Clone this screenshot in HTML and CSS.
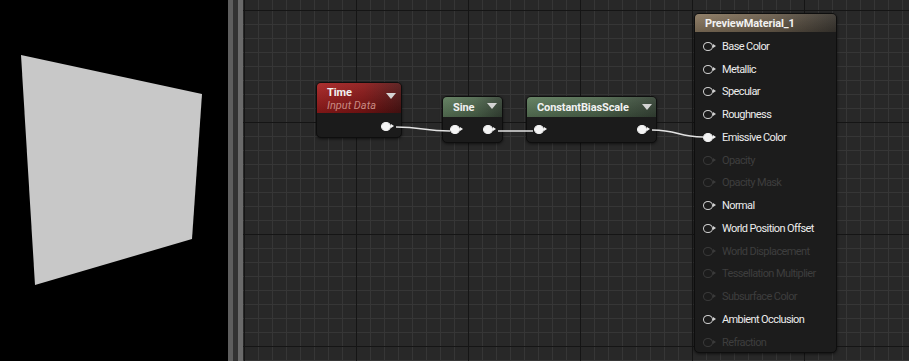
FILE: index.html
```html
<!DOCTYPE html>
<html>
  <head>
    <title>Material Editor</title>
    <link rel="stylesheet" href="styles.css">
  </head>
  <body>
    <div class="viewport">
      <svg class="preview" viewBox="0 0 228 361" width="228" height="361">
        <polygon points="21,55 202,94 192,239 35,285" fill="#c8c8c8" />
      </svg>
    </div>

    <div class="splitter">
      <span class="bar light"></span>
      <span class="bar dark"></span>
      <span class="bar lighter"></span>
    </div>

    <div class="graph">
      <!-- Time -->
      <div class="node time">
        <div class="node-head red tall">
          <div class="titles">
            <div class="node-title">Time</div>
            <div class="node-sub">Input Data</div>
          </div>
          <span class="caret"></span>
        </div>
        <div class="node-body out-only">
          <span class="pin on"></span>
        </div>
      </div>

      <!-- Sine -->
      <div class="node sine">
        <div class="node-head green">
          <div class="node-title">Sine</div>
          <span class="caret"></span>
        </div>
        <div class="node-body both">
          <span class="pin on"></span>
          <span class="pin on"></span>
        </div>
      </div>

      <!-- ConstantBiasScale -->
      <div class="node bias">
        <div class="node-head green">
          <div class="node-title">ConstantBiasScale</div>
          <span class="caret"></span>
        </div>
        <div class="node-body both">
          <span class="pin on"></span>
          <span class="pin on"></span>
        </div>
      </div>

      <!-- Result node -->
      <div class="node material">
        <div class="node-head tan">
          <div class="node-title">PreviewMaterial_1</div>
        </div>
        <div class="node-body inputs">
          <div class="row"><span class="pin"></span>Base Color</div>
          <div class="row"><span class="pin"></span>Metallic</div>
          <div class="row"><span class="pin"></span>Specular</div>
          <div class="row"><span class="pin"></span>Roughness</div>
          <div class="row"><span class="pin on"></span>Emissive Color</div>
          <div class="row off"><span class="pin"></span>Opacity</div>
          <div class="row off"><span class="pin"></span>Opacity Mask</div>
          <div class="row"><span class="pin"></span>Normal</div>
          <div class="row"><span class="pin"></span>World Position Offset</div>
          <div class="row off"><span class="pin"></span>World Displacement</div>
          <div class="row off"><span class="pin"></span>Tessellation Multiplier</div>
          <div class="row off"><span class="pin"></span>Subsurface Color</div>
          <div class="row"><span class="pin"></span>Ambient Occlusion</div>
          <div class="row off"><span class="pin"></span>Refraction</div>
        </div>
      </div>

      <svg class="wires" width="666" height="361">
        <path d="M153 127 C 180 127, 180 131, 207 131" />
        <path d="M255 131 L 290 131" />
        <path d="M409 130 C 436 130, 434 137, 460 137" />
      </svg>
    </div>
  </body>
</html>
```

FILE: styles.css
```css
html, body {
  margin: 0;
  height: 100%;
}
body {
  display: flex;
  width: 909px;
  height: 361px;
  overflow: hidden;
  background: #000;
  font-family: Roboto, "Liberation Sans", sans-serif;
  font-size: 11px;
}

.viewport {
  width: 228px;
  flex: none;
  background: #000;
}
.preview {
  display: block;
}

.splitter {
  display: flex;
  flex: none;
}
.bar {
  width: 5px;
}
.bar.light {
  background: #5e5e5e;
}
.bar.dark {
  background: #323232;
}
.bar.lighter {
  background: #6a6a6a;
}

.graph {
  flex: 1;
  position: relative;
  background-color: #282828;
  background-image:
    linear-gradient(to right, #151515 1px, transparent 1px),
    linear-gradient(to bottom, #151515 1px, transparent 1px),
    linear-gradient(to right, #363636 1px, transparent 1px),
    linear-gradient(to bottom, #363636 1px, transparent 1px);
  background-size: 112px 112px, 112px 112px, 14px 14px, 14px 14px;
  background-position: 1px 10px, 1px 10px, 1px 10px, 1px 10px;
}

/* nodes */
.node {
  position: absolute;
  display: flex;
  flex-direction: column;
  background: #1b1b1b;
  border: 1px solid #0e0e0e;
  border-radius: 5px;
  overflow: hidden;
  box-shadow: 0 1px 3px rgba(0, 0, 0, 0.6);
  box-sizing: border-box;
}
.time {
  left: 73px;
  top: 82px;
  width: 86px;
  height: 56px;
}
.sine {
  left: 199px;
  top: 96px;
  width: 61px;
  height: 47px;
}
.bias {
  left: 283px;
  top: 96px;
  width: 131px;
  height: 47px;
}
.material {
  left: 451px;
  top: 13px;
  width: 143px;
  height: 340px;
  background: #1c1c1c;
}

.node-head {
  position: relative;
  display: flex;
  align-items: center;
  height: 20px;
  padding-left: 10px;
  flex: none;
}
.node-head.tall {
  height: 30px;
  align-items: flex-start;
  padding-top: 3px;
  box-sizing: border-box;
}
.node-head.red {
  background:
    linear-gradient(to bottom, rgba(255, 255, 255, 0.08), rgba(0, 0, 0, 0.25)),
    linear-gradient(to right, #a61e1e, #8c1616 55%, #531515);
}
.node-head.green {
  background:
    linear-gradient(to bottom, rgba(255, 255, 255, 0.06), rgba(0, 0, 0, 0.2)),
    linear-gradient(to right, #5e7c5c, #50694f 55%, #384638);
}
.node-head.tan {
  height: 18px;
  background:
    linear-gradient(to bottom, rgba(255, 255, 255, 0.05), rgba(0, 0, 0, 0.2)),
    linear-gradient(to right, #8c7a62, #6c5f4e 55%, #3c3832);
}

.node-title {
  color: #f2f2f2;
  font-weight: 700;
  line-height: 13px;
  letter-spacing: -0.1px;
}
.node-sub {
  color: #c98a82;
  font-style: italic;
  line-height: 13px;
}

.caret {
  position: absolute;
  right: 5px;
  top: 6px;
  width: 0;
  height: 0;
  border-left: 5px solid transparent;
  border-right: 5px solid transparent;
  border-top: 6px solid #d4d4d4;
}
.tall .caret {
  top: 10px;
}
.bias .caret {
  top: 7px;
  right: 4px;
}

.node-body {
  flex: 1;
  display: flex;
  align-items: center;
}
.node-body.out-only {
  justify-content: flex-end;
  padding: 2px 10px 0 0;
}
.node-body.both {
  justify-content: space-between;
  padding: 0 9px 0 7px;
}
.node-body.inputs {
  flex-direction: column;
  align-items: stretch;
  padding-top: 3px;
}

.row {
  display: flex;
  align-items: center;
  height: 22.75px;
  padding-left: 8px;
  color: #ececec;
  letter-spacing: -0.6px;
  white-space: nowrap;
}
.row .pin {
  margin-right: 9px;
}
.row.off {
  color: #3e3e3e;
}

/* pins */
.pin {
  position: relative;
  display: inline-block;
  width: 10px;
  height: 9px;
  box-sizing: border-box;
  border: 1.8px solid;
  border-radius: 50%;
  color: #d2d2d2;
  flex: none;
}
.pin::after {
  content: "";
  position: absolute;
  right: -3.5px;
  top: 50%;
  margin-top: -2.5px;
  border-left: 3px solid currentColor;
  border-top: 2.5px solid transparent;
  border-bottom: 2.5px solid transparent;
}
.pin.on {
  color: #f4f4f4;
  background: #f4f4f4;
}
.row.off .pin {
  color: #3a3a3a;
}

.wires {
  position: absolute;
  left: 0;
  top: 0;
  pointer-events: none;
}
.wires path {
  fill: none;
  stroke: #e2e2e2;
  stroke-width: 1.6;
}
```
